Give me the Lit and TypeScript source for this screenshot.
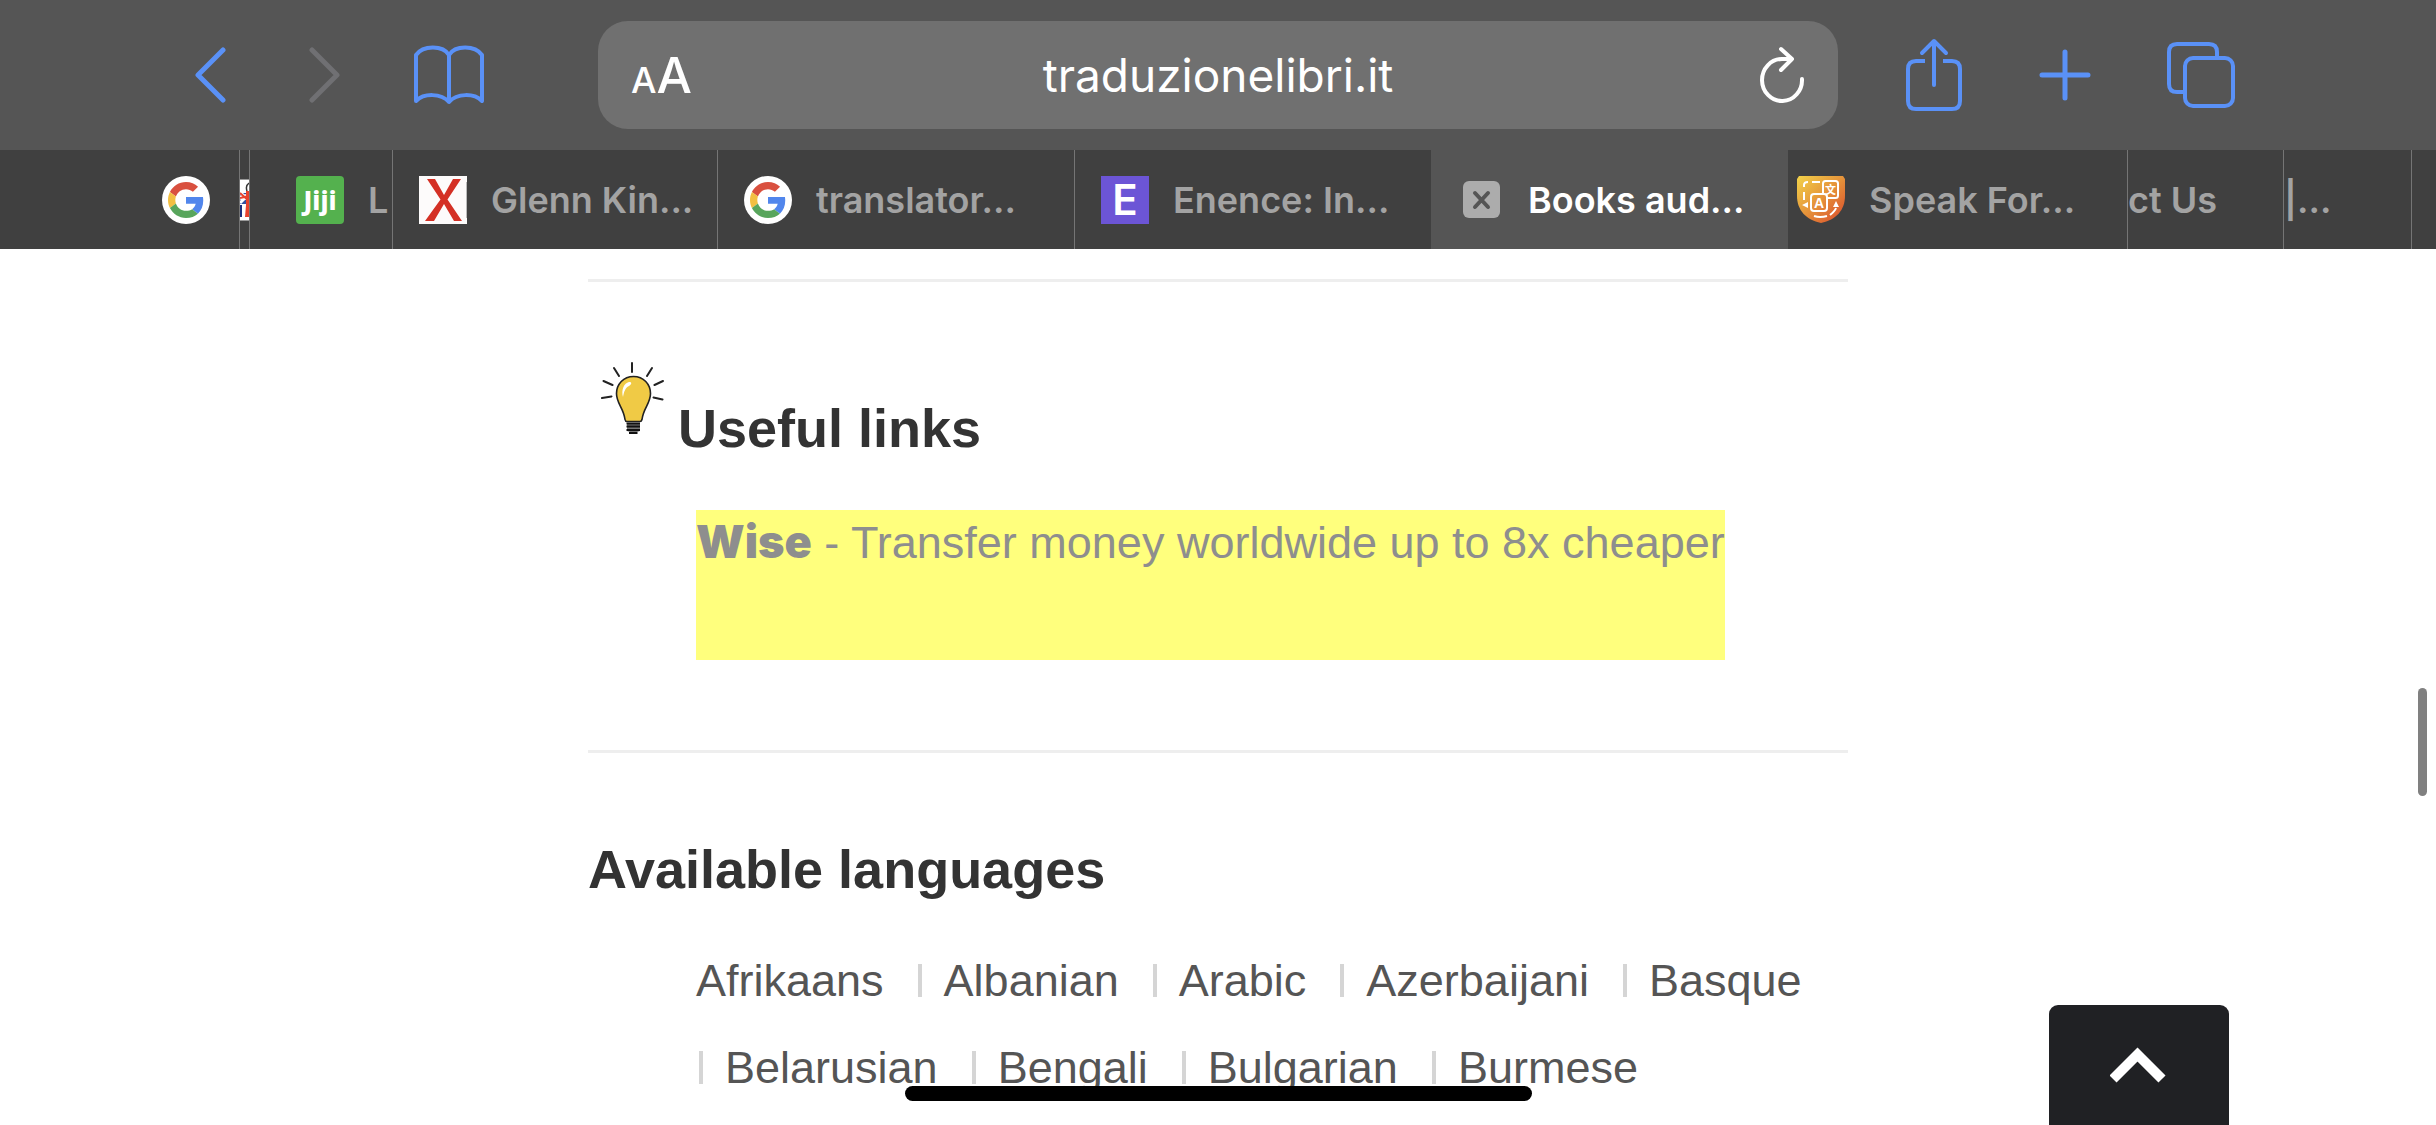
import { LitElement, html, svg, css, nothing, TemplateResult } from "lit";
import { customElement, property } from "lit/decorators.js";
import { classMap } from "lit/directives/class-map.js";
import { styleMap } from "lit/directives/style-map.js";

type IconName = "google" | "flag" | "jiji" | "cross" | "enence" | "shield";

interface Tab {
  name: string;
  label?: string;
  icon?: IconName;
  span: number;
  active?: boolean;
  align?: "end" | "flush" | "tight" | "wide";
}

const tabs: Tab[] = [
  { name: "Google", icon: "google", span: 239, align: "end" },
  { name: "English", icon: "flag", span: 10, align: "flush" },
  { name: "Jiji", label: "L", icon: "jiji", span: 143, align: "wide" },
  { name: "Glenn", label: "Glenn Kin...", icon: "cross", span: 325 },
  { name: "Translator", label: "translator...", icon: "google", span: 357 },
  { name: "Enence", label: "Enence: In...", icon: "enence", span: 357 },
  { name: "Books", label: "Books aud...", span: 357, active: true },
  { name: "Speak", label: "Speak For...", icon: "shield", span: 339, align: "tight" },
  { name: "Contact", label: "ct Us", span: 156, align: "flush" },
  { name: "More", label: "|...", span: 128, align: "flush" },
  { name: "Last", span: 25, align: "flush" },
];

const languages = [
  "Afrikaans",
  "Albanian",
  "Arabic",
  "Azerbaijani",
  "Basque",
  "Belarusian",
  "Bengali",
  "Bulgarian",
  "Burmese",
];

const favicons: Record<IconName, TemplateResult> = {
  google: svg`
    <circle cx="24" cy="24" r="24" fill="#fff"></circle>
    <g transform="translate(6 6) scale(.75)">
      <path fill="#d9503f" d="M24 9.5c3.54 0 6.71 1.22 9.21 3.6l6.85-6.85C35.9 2.38 30.47 0 24 0 14.62 0 6.51 5.38 2.56 13.22l7.98 6.19C12.43 13.72 17.74 9.5 24 9.5z"></path>
      <path fill="#5186ec" d="M46.98 24.55c0-1.57-.15-3.09-.38-4.55H24v9.02h12.94c-.58 2.96-2.26 5.48-4.78 7.18l7.73 6c4.51-4.18 7.09-10.36 7.09-17.65z"></path>
      <path fill="#f2bf42" d="M10.53 28.59c-.48-1.45-.76-2.99-.76-4.59s.27-3.14.76-4.59l-7.98-6.19C.92 16.46 0 20.12 0 24c0 3.88.92 7.54 2.56 10.78l7.97-6.19z"></path>
      <path fill="#58a55c" d="M24 48c6.48 0 11.93-2.13 15.89-5.81l-7.73-6c-2.15 1.45-4.92 2.3-8.16 2.3-6.26 0-11.57-4.22-13.47-9.91l-7.98 6.19C6.51 42.62 14.62 48 24 48z"></path>
    </g>`,
  flag: svg`
    <rect y="3" width="48" height="42" fill="#fff"></rect>
    <rect y="3" width="48" height="1" fill="#999"></rect>
    <rect y="44" width="48" height="1" fill="#999"></rect>
    <path d="M9 7c-3 2-3 5-2 8" fill="none" stroke="#333" stroke-width="1.5"></path>
    <path d="M0 17h9v11H0z" fill="#33509f"></path>
    <path d="M0 16l9 9M0 27l9-9" stroke="#fff" stroke-width="3"></path>
    <path d="M0 22l9-2" stroke="#fff" stroke-width="5"></path>
    <path d="M0 22l9-2M0 17l9 8" stroke="#e8432e" stroke-width="2"></path>
    <path d="M6 15h3v26H5l1-12z" fill="#e8432e"></path>
    <path d="M0 29h2v12H0z" fill="#1c2f7d"></path>`,
  jiji: svg`
    <rect width="48" height="48" rx="4" fill="#54b14e"></rect>
    <text x="24" y="34" class="jiji">Jiji</text>`,
  cross: svg`
    <rect width="48" height="48" fill="#fdfbfb"></rect>
    <rect x="47" y="6" width="1" height="36" fill="#bbb"></rect>
    <path d="M8 3h8l9 16 9-16h8L28.500 23.500 43 45h-8L25 28 15 45H6l15.500-21.500z" fill="#d43025"></path>`,
  enence: svg`
    <rect width="48" height="48" fill="#6c55d6"></rect>
    <text x="24" y="39" class="enence">E</text>`,
  shield: svg`
    <defs>
      <linearGradient id="sh" x1="0" y1="0" x2="1" y2="1">
        <stop offset="0" stop-color="#f2d34a"></stop>
        <stop offset=".5" stop-color="#e5923a"></stop>
        <stop offset="1" stop-color="#d9482b"></stop>
      </linearGradient>
    </defs>
    <path d="M2 0h44l2 3v17c0 14-9 24-24 27C9 44 0 34 0 20V3z" fill="url(#sh)"></path>
    <g fill="none" stroke="#fff" stroke-width="2">
      <path d="M26 17V7.500q0-2.500 2.500-2.500h10q2.500 0 2.500 2.500v12q0 2.500-2.500 2.500H31"></path>
      <rect x="14" y="18" width="16" height="17" rx="3"></rect>
      <path d="M7 24v-8M7 11V9q0-3 4-3M15 6h8"></path>
      <path d="M17 40q6 2 13 0M33 39q5-4 6-7"></path>
    </g>
    <path d="M5 29l6-3v6zM36 31l3-6 3 6z" fill="#fff"></path>
    <text x="22" y="32" class="shield-a">A</text>
    <text x="33.500" y="18" class="shield-w">文</text>`,
};

const stroke = (w: number, h: number, body: TemplateResult, width = 5) => html`
  <svg width=${w} height=${h} viewBox="0 0 ${w} ${h}" fill="none" stroke="currentColor"
    stroke-width=${width} stroke-linecap="round" stroke-linejoin="round" aria-hidden="true">${body}</svg>`;

const icons = {
  back: stroke(32, 56, svg`<path d="M29 3L4 28l25 25"></path>`),
  forward: stroke(32, 56, svg`<path d="M3 3l25 25L3 53"></path>`),
  book: stroke(72, 60, svg`
    <path d="M36 10C30 0 10 0 3 10v46c8-8 25-8 33 1 8-9 25-9 33-1V10C62 0 42 0 36 10zM36 10v47"></path>`, 4),
  reload: stroke(46, 58, svg`
    <path d="M43 33A20 21 0 1 1 23 13h10M22 3l11 10-11 11"></path>`, 4),
  share: stroke(58, 74, svg`
    <path stroke-linecap="butt" d="M20 23h-9q-8 0-8 8v32q0 8 8 8h36q8 0 8-8V31q0-8-8-8h-9"></path>
    <path d="M29 47V4M17 15L29 3l12 12"></path>`, 4),
  plus: stroke(52, 52, svg`<path d="M26 3v46M3 26h46"></path>`),
  windows: stroke(68, 68, svg`
    <rect x="18" y="17" width="48" height="48" rx="8"></rect>
    <path stroke-linecap="butt" d="M50 16v-5q0-8-8-8H10q-8 0-8 8v32q0 8 8 8h7"></path>`, 4),
};

@customElement("browser-toolbar")
class BrowserToolbar extends LitElement {
  @property() address = "";

  static styles = css`
    :host {
      display: grid;
      grid-template-columns: 598fr 1240fr 598fr;
      align-items: center;
      height: 150px;
      background: #555;
      color: #5a91f7;
      font-family: Inter, "Noto Sans", sans-serif;
    }
    button {
      display: flex;
      align-items: center;
      padding: 0;
      border: 0;
      background: none;
      color: inherit;
      font: inherit;
    }
    svg {
      display: block;
    }
    .left,
    .right {
      display: flex;
      align-items: center;
    }
    .left {
      justify-content: flex-end;
      gap: 72px;
      padding-right: 113px;
    }
    .history {
      display: flex;
      gap: 83px;
    }
    .history button:disabled {
      color: #707073;
    }
    .right {
      gap: 76px;
      padding-left: 67px;
    }
    .address {
      display: flex;
      align-items: center;
      justify-content: space-between;
      height: 108px;
      padding: 0 33px;
      border-radius: 30px;
      background: #707070;
      color: #fff;
    }
    .address input {
      flex: 1;
      min-width: 0;
      padding: 0;
      border: 0;
      background: none;
      color: inherit;
      font: 400 46px/60px Inter, "Noto Sans", sans-serif;
      text-align: center;
    }
    .reader {
      display: flex;
      align-items: baseline;
      width: 60px;
      line-height: 60px;
      padding-top: 4px;
      font-weight: 500;
    }
    .small {
      font-size: 36px;
    }
    .large {
      font-size: 50px;
    }
    .reload {
      width: 60px;
      justify-content: flex-end;
    }
  `;

  render() {
    return html`
      <div class="left">
        <div class="history">
          <button aria-label="Back">${icons.back}</button>
          <button aria-label="Forward" disabled>${icons.forward}</button>
        </div>
        <button aria-label="Bookmarks">${icons.book}</button>
      </div>
      <div class="address">
        <button class="reader" aria-label="Page settings">
          <span class="small">A</span><span class="large">A</span>
        </button>
        <input type="text" aria-label="Address" .value=${this.address} />
        <button class="reload" aria-label="Reload">${icons.reload}</button>
      </div>
      <div class="right">
        <button aria-label="Share">${icons.share}</button>
        <button aria-label="New tab">${icons.plus}</button>
        <button aria-label="Show tabs">${icons.windows}</button>
      </div>
    `;
  }
}

@customElement("tab-strip")
class TabStrip extends LitElement {
  static styles = css`
    :host {
      display: block;
      font: 600 36px/48px Inter, "Noto Sans", sans-serif;
    }
    .strip {
      display: grid;
      height: 99px;
      background: #404040;
      color: #a3a3a3;
    }
    .tab {
      display: flex;
      align-items: center;
      min-width: 0;
      overflow: hidden;
      gap: 24px;
      padding-left: 26px;
      border-left: 1px solid #757575;
    }
    .tab:first-child {
      border-left-color: transparent;
    }
    .end {
      justify-content: flex-end;
      padding: 0 29px 0 0;
    }
    .flush {
      padding-left: 0;
    }
    .tight {
      padding-left: 8px;
      border-left-color: transparent;
    }
    .wide {
      padding-left: 46px;
    }
    .active {
      border-left-color: #555;
      background: #555;
      color: #fff;
    }
    button {
      flex: none;
      display: flex;
      align-items: center;
      justify-content: center;
      gap: 24px;
      padding: 0;
      border: 0;
      background: none;
      color: inherit;
      font: inherit;
      white-space: nowrap;
    }
    svg {
      flex: none;
      display: block;
      overflow: visible;
    }
    .close {
      width: 46px;
      height: 48px;
    }
    .jiji {
      fill: #fff;
      font: 800 26px "Noto Sans", sans-serif;
      text-anchor: middle;
    }
    .enence {
      fill: #fff;
      font: 600 42px Inter, sans-serif;
      text-anchor: middle;
    }
    .shield-a {
      fill: #fff;
      font: 700 14px "Liberation Sans", sans-serif;
      text-anchor: middle;
    }
    .shield-w {
      fill: #fff;
      font: 700 11px "Noto Sans CJK SC", sans-serif;
      text-anchor: middle;
    }
  `;

  private renderTab(tab: Tab) {
    const classes = { tab: true, active: !!tab.active, [tab.align ?? "normal"]: true };
    return html`
      <div class=${classMap(classes)}>
        ${tab.active
          ? html`<button class="close" aria-label="Close tab">
              <svg width="37" height="37" viewBox="0 0 37 37" aria-hidden="true">
                <rect width="37" height="37" rx="6" fill="#acacac"></rect>
                <path d="M12 12l13 14M25 12L12 26" stroke="#555" stroke-width="4" stroke-linecap="round"></path>
              </svg>
            </button>`
          : nothing}
        ${tab.icon || tab.label
          ? html`<button aria-label=${tab.name}>
              ${tab.icon
                ? html`<svg width="48" height="48" viewBox="0 0 48 48" aria-hidden="true">${favicons[tab.icon]}</svg>`
                : nothing}
              ${tab.label ? html`<span>${tab.label}</span>` : nothing}
            </button>`
          : nothing}
      </div>
    `;
  }

  render() {
    const columns = tabs.map((t) => `minmax(0, ${t.span}fr)`).join(" ");
    return html`<nav class="strip" style=${styleMap({ gridTemplateColumns: columns })}>
      ${tabs.map((t) => this.renderTab(t))}
    </nav>`;
  }
}

@customElement("app-root")
class AppRoot extends LitElement {
  static styles = css`
    :host {
      display: block;
      height: 100vh;
      overflow: hidden;
      background: #fff;
      color: #555;
      font: 400 45px/66px "Liberation Sans", Arial, sans-serif;
    }
    main {
      max-width: 1260px;
      margin: 0 auto;
      padding-top: 30px;
    }
    hr {
      height: 3px;
      margin: 0;
      border: 0;
      background: #eee;
    }
    h2 {
      margin: 0;
      color: #333;
      font-size: 54px;
      line-height: 60px;
    }
    .useful {
      display: flex;
      align-items: flex-end;
      gap: 14px;
      height: 98px;
      margin-top: 78px;
      padding-left: 12px;
    }
    .bulb {
      flex: none;
      align-self: flex-start;
    }
    .links {
      display: flex;
      margin: 52px 0 90px;
      padding-left: 108px;
    }
    .wise {
      min-height: 150px;
      background: #ffff7d;
      color: #8e8e8e;
      text-decoration: none;
    }
    .wise strong {
      font-family: Inter, sans-serif;
      font-weight: 900;
      line-height: 1;
    }
    .available {
      margin-top: 86px;
    }
    ul {
      display: flex;
      flex-wrap: wrap;
      margin: 38px 0 0;
      padding: 0 0 0 108px;
      list-style: none;
      line-height: 87px;
    }
    li {
      display: flex;
      align-items: center;
      gap: 22px;
      padding-right: 31px;
    }
    li + li::before {
      content: "";
      width: 4px;
      height: 33px;
      margin-left: 3px;
      background: #d5d5d5;
    }
    li a {
      color: inherit;
      text-decoration: none;
    }
    .to-top {
      position: fixed;
      right: 207px;
      bottom: 0;
      width: 180px;
      height: 120px;
      padding: 0;
      border: 0;
      border-radius: 9px 9px 0 0;
      background: #202124;
    }
    .to-top svg {
      display: block;
      margin: 0 auto;
    }
    .thumb {
      position: fixed;
      top: 688px;
      right: 9px;
      width: 9px;
      height: 108px;
      border-radius: 5px;
      background: #808080;
    }
    .home {
      position: fixed;
      right: 0;
      bottom: 24px;
      left: 0;
      width: 627px;
      height: 15px;
      margin: 0 auto;
      border-radius: 8px;
      background: #000;
    }
  `;

  render() {
    return html`
      <browser-toolbar address="traduzionelibri.it"></browser-toolbar>
      <tab-strip></tab-strip>
      <main>
        <hr />
        <div class="useful">
          <svg class="bulb" width="64" height="76" viewBox="0 0 64 76" aria-hidden="true">
            <g fill="none" stroke="#222" stroke-width="2" stroke-linecap="round">
              <path d="M32 3v9M14 8l5 8M52 8l-5 8M3.500 21l9 4M63 21l-8.500 4M2 38l9.500-1.500M53.500 37.500l9 2"></path>
            </g>
            <path d="M33.500 16.500c-10 0-17 7.500-17 17 0 10 7 14 8.500 26q.3 2 2 2h13q1.500 0 2-2c1.500-12 8.500-16 8.500-26 0-9.500-7-17-17-17z" fill="#f0ca45" stroke="#222" stroke-width="1.600"></path>
            <path d="M23 37c-2-7 1-14 6-15 3 0 3 2 0 4-4 2-5 6-6 11z" fill="#fff"></path>
            <path d="M27 63h13v8l-3 1-2 2h-3l-2-2-3-1z" fill="#777"></path>
            <path d="M26.500 63.500h13.500M26.500 66.500h13.500M26.500 70h13.500M29 73h8.500" stroke="#111" stroke-width="1.800"></path>
          </svg>
          <h2>Useful links</h2>
        </div>
        <div class="links">
          <a class="wise" href="#wise"><strong>Wise</strong> - Transfer money worldwide up to 8x cheaper</a>
        </div>
        <hr />
        <h2 class="available">Available languages</h2>
        <ul>
          ${languages.map((l) => html`<li><a href="#${l.toLowerCase()}">${l}</a></li>`)}
        </ul>
      </main>
      <button class="to-top" aria-label="Back to top">
        <svg width="58" height="38" viewBox="0 0 58 38" aria-hidden="true">
          <path d="M3 33L27.500 8.500 52 33" fill="none" stroke="#fff" stroke-width="10"></path>
        </svg>
      </button>
      <div class="thumb"></div>
      <div class="home"></div>
    `;
  }
}
